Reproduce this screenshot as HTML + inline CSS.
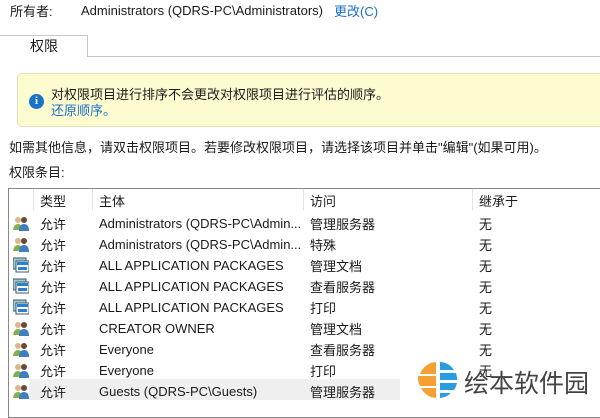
<!DOCTYPE html>
<html><head><meta charset="utf-8"><style>
*{margin:0;padding:0;box-sizing:border-box}
body{width:600px;height:406px;overflow:hidden;background:#fff;position:relative;font-family:"Liberation Sans","Noto Sans CJK SC",sans-serif;font-size:13px;color:#1a1a1a}
.a{position:absolute;white-space:nowrap}
.row{position:absolute;left:9px;width:600px;height:21px}
.row span{position:absolute;top:2px}
.row span.l{top:4px}
.ic{position:absolute;left:4px;top:3px;width:16px;height:16px}
</style></head><body>
<div class="a" style="left:10px;top:1px">所有者:</div>
<div class="a" style="left:81px;top:3px">Administrators (QDRS-PC\Administrators)</div>
<div class="a" style="left:334px;top:1px;color:#1a6fc9">更改(C)</div>
<div class="a" style="left:0;top:35px;width:88px;height:22px;border:1px solid #c8c8c8;border-bottom:none;border-left:none;background:#fff"></div>
<div class="a" style="left:87px;top:56px;width:513px;height:1px;background:#c8c8c8"></div>
<div class="a" style="left:30px;top:36px;font-size:14px">权限</div>
<div class="a" style="left:17px;top:73px;width:600px;height:54px;background:#fdfbd0;border:1px solid #e3e0b8;border-radius:5px"></div>
<div class="a" style="left:29px;top:94px;width:15px;height:15px;border-radius:50%;background:#1a73c9;color:#fff;font-size:11px;font-weight:bold;text-align:center;line-height:15px;font-family:'Liberation Serif',serif">i</div>
<div class="a" style="left:51px;top:84px">对权限项目进行排序不会更改对权限项目进行评估的顺序。</div>
<div class="a" style="left:51px;top:100px;color:#1a6fc9">还原顺序。</div>
<div class="a" style="left:9px;top:137px">如需其他信息，请双击权限项目。若要修改权限项目，请选择该项目并单击"编辑"(如果可用)。</div>
<div class="a" style="left:9px;top:162px">权限条目:</div>
<div class="a" style="left:8px;top:188px;width:600px;height:230px;border:1px solid #888;border-right:none"></div>
<div class="a" style="left:33px;top:189px;width:1px;height:21px;background:#e5e5e5"></div>
<div class="a" style="left:92px;top:189px;width:1px;height:21px;background:#e5e5e5"></div>
<div class="a" style="left:303px;top:189px;width:1px;height:21px;background:#e5e5e5"></div>
<div class="a" style="left:472px;top:189px;width:1px;height:21px;background:#e5e5e5"></div>
<div class="a" style="left:40px;top:191px">类型</div>
<div class="a" style="left:99px;top:191px">主体</div>
<div class="a" style="left:310px;top:191px">访问</div>
<div class="a" style="left:479px;top:191px">继承于</div>
<div class="a" style="left:29px;top:379px;width:371px;height:21px;background:#efefef"></div>

<svg width="0" height="0" style="position:absolute"><defs>
<g id="u"><circle cx="5" cy="5" r="3" fill="#d9b98a"/><path d="M0 15 Q1 9 5 9 Q9 9 9 15Z" fill="#7fb04a"/><circle cx="11" cy="5" r="3" fill="#6b4a35"/><path d="M6 16 Q6 9 11 9 Q16 9 16 16Z" fill="#3f7fc0"/></g>
<g id="p"><rect x="0" y="1" width="13" height="11" fill="#9cc" stroke="#456" stroke-width="1"/><rect x="3" y="4" width="13" height="11" fill="#fff" stroke="#456" stroke-width="1"/><rect x="4" y="5" width="11" height="3" fill="#2a7fd0"/><rect x="5" y="10" width="9" height="3" fill="#2a7fd0"/></g>
</defs></svg>

<div class="row" style="top:212px"><svg class="ic" viewBox="0 0 16 16"><use href="#u"/></svg><span style="left:31px">允许</span><span class="l" style="left:90px">Administrators (QDRS-PC\Admin...</span><span style="left:301px">管理服务器</span><span style="left:470px">无</span></div>
<div class="row" style="top:233px"><svg class="ic" viewBox="0 0 16 16"><use href="#u"/></svg><span style="left:31px">允许</span><span class="l" style="left:90px">Administrators (QDRS-PC\Admin...</span><span style="left:301px">特殊</span><span style="left:470px">无</span></div>
<div class="row" style="top:254px"><svg class="ic" viewBox="0 0 16 16"><use href="#p"/></svg><span style="left:31px">允许</span><span class="l" style="left:90px">ALL APPLICATION PACKAGES</span><span style="left:301px">管理文档</span><span style="left:470px">无</span></div>
<div class="row" style="top:275px"><svg class="ic" viewBox="0 0 16 16"><use href="#p"/></svg><span style="left:31px">允许</span><span class="l" style="left:90px">ALL APPLICATION PACKAGES</span><span style="left:301px">查看服务器</span><span style="left:470px">无</span></div>
<div class="row" style="top:296px"><svg class="ic" viewBox="0 0 16 16"><use href="#p"/></svg><span style="left:31px">允许</span><span class="l" style="left:90px">ALL APPLICATION PACKAGES</span><span style="left:301px">打印</span><span style="left:470px">无</span></div>
<div class="row" style="top:317px"><svg class="ic" viewBox="0 0 16 16"><use href="#u"/></svg><span style="left:31px">允许</span><span class="l" style="left:90px">CREATOR OWNER</span><span style="left:301px">管理文档</span><span style="left:470px">无</span></div>
<div class="row" style="top:338px"><svg class="ic" viewBox="0 0 16 16"><use href="#u"/></svg><span style="left:31px">允许</span><span class="l" style="left:90px">Everyone</span><span style="left:301px">查看服务器</span><span style="left:470px">无</span></div>
<div class="row" style="top:359px"><svg class="ic" viewBox="0 0 16 16"><use href="#u"/></svg><span style="left:31px">允许</span><span class="l" style="left:90px">Everyone</span><span style="left:301px">打印</span><span style="left:470px">无</span></div>
<div class="row" style="top:380px"><svg class="ic" viewBox="0 0 16 16"><use href="#u"/></svg><span style="left:31px">允许</span><span class="l" style="left:90px">Guests (QDRS-PC\Guests)</span><span style="left:301px">管理服务器</span></div>

<svg class="a" style="left:418px;top:360px" width="40" height="40" viewBox="0 0 40 40">
<path d="M18 2 A18 18 0 0 0 2 14 L18 14Z" fill="#f5a030"/>
<path d="M18 16 L0 16 A18 18 0 0 0 2 26 L18 26Z" fill="#f5a030"/>
<path d="M18 28 L3 28 A18 18 0 0 0 18 38Z" fill="#f5a030"/>
<path d="M22 2 A18 18 0 0 1 36 10 L22 10Z" fill="#2a9de0"/>
<path d="M22 13 L38 13 A18 18 0 0 1 39 20 L22 20Z" fill="#2a9de0"/>
<path d="M22 23 L39 23 A18 18 0 0 1 36 30 L22 30Z" fill="#2a9de0"/>
<path d="M22 33 L33 33 A18 18 0 0 1 22 38Z" fill="#2a9de0"/>
</svg>
<div class="a" style="left:464px;top:364px;font-size:25px;color:#444">绘本软件园</div>
</body></html>
